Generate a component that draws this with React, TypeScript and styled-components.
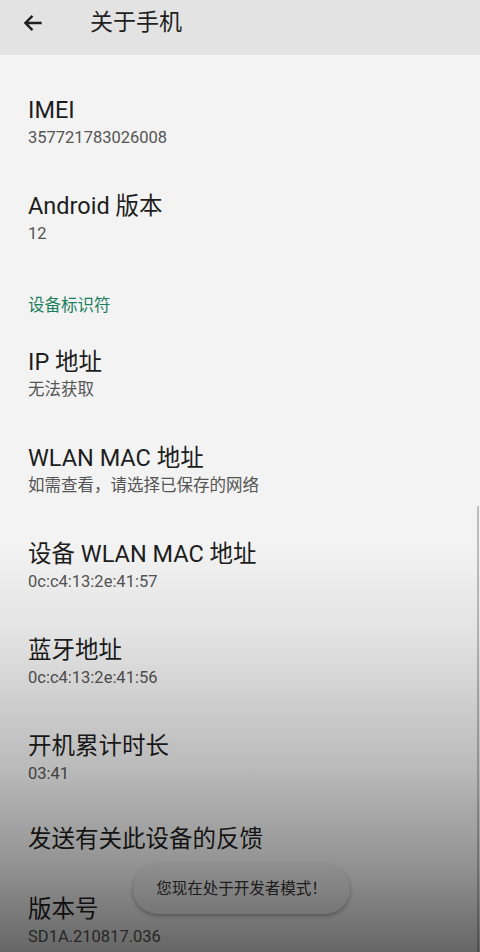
import React, { FC } from "react";
import styled, { createGlobalStyle } from "styled-components";

const GlobalStyle = createGlobalStyle`
    html, body {
        margin: 0;
        padding: 0;
        background: #f3f3f3;
    }
    body {
        font-family: Roboto, "Noto Sans CJK SC", sans-serif;
    }
`;

const Screen = styled.div`
    position: relative;
    width: 480px;
    height: 952px;
    overflow: hidden;
    background: #f3f3f3;
`;

const TopBar = styled.header`
    height: 55px;
    background: #e3e3e3;
    display: flex;
    align-items: flex-start;
    padding: 8px 0 0 20px;
    box-sizing: border-box;
    gap: 44px;
`;

const BackIcon = styled.svg`
    width: 26px;
    height: 26px;
    color: #1f1f1f;
    margin-top: 2px;
`;

const Title = styled.h1`
    margin: 0;
    font-size: 23px;
    line-height: 30px;
    font-weight: 400;
    color: #1f1f1f;
`;

const List = styled.ul`
    list-style: none;
    margin: 0;
    padding: 20px 0 0;
`;

const Entry = styled.li<{ $single?: boolean }>`
    padding: ${p => (p.$single ? "17px 28px 20px" : "20px 28px")};
    display: flex;
    flex-direction: column;
`;

const EntryTitle = styled.div`
    font-size: 23.5px;
    line-height: 30px;
    color: #1d1d1d;
`;

const EntrySummary = styled.div`
    font-size: 16.5px;
    line-height: 26px;
    color: #555;
`;

const SectionHeader = styled.li`
    padding: 28px 28px 10px;
    font-size: 16.5px;
    line-height: 22px;
    color: #1b7f5c;
`;

const Scrollbar = styled.div`
    position: absolute;
    right: 1px;
    top: 506px;
    bottom: 0;
    width: 2px;
    background: #bdbdbd;
`;

const Toast = styled.div`
    position: absolute;
    left: 133px;
    top: 864px;
    width: 217px;
    height: 50px;
    border-radius: 25px;
    background: #ececec;
    box-shadow: 0 2px 4px rgba(0, 0, 0, 0.3);
    display: flex;
    align-items: center;
    justify-content: center;
    padding-bottom: 4px;
    box-sizing: border-box;
    font-size: 15.5px;
    color: #333;
`;

const Shade = styled.div`
    position: absolute;
    inset: 0;
    pointer-events: none;
    background: linear-gradient(
        to bottom,
        rgba(0, 0, 0, 0) 0%,
        rgba(0, 0, 0, 0) 57%,
        rgba(0, 0, 0, 0.07) 67%,
        rgba(0, 0, 0, 0.24) 81%,
        rgba(0, 0, 0, 0.4) 91%,
        rgba(0, 0, 0, 0.58) 100%
    );
`;

interface Info {
    title: string;
    summary?: string;
}

const deviceInfo: Info[] = [
    { title: "IMEI", summary: "357721783026008" },
    { title: "Android 版本", summary: "12" }
];

const identifiers: Info[] = [
    { title: "IP 地址", summary: "无法获取" },
    { title: "WLAN MAC 地址", summary: "如需查看，请选择已保存的网络" },
    { title: "设备 WLAN MAC 地址", summary: "0c:c4:13:2e:41:57" },
    { title: "蓝牙地址", summary: "0c:c4:13:2e:41:56" },
    { title: "开机累计时长", summary: "03:41" },
    { title: "发送有关此设备的反馈" },
    { title: "版本号", summary: "SD1A.210817.036" }
];

const InfoEntry: FC<{ info: Info }> = ({ info }) => (
    <Entry $single={!info.summary}>
        <EntryTitle>{info.title}</EntryTitle>
        {info.summary ? <EntrySummary>{info.summary}</EntrySummary> : null}
    </Entry>
);

const App: FC = () => (
    <>
        <GlobalStyle />
        <Screen>
            <TopBar>
                <BackIcon viewBox="0 0 24 24" fill="none" stroke="currentColor" strokeWidth={2.2}>
                    <path d="M20 12H5M11.5 5.5 5 12l6.5 6.5" />
                </BackIcon>
                <Title>关于手机</Title>
            </TopBar>
            <List>
                {deviceInfo.map(i => (
                    <InfoEntry key={i.title} info={i} />
                ))}
                <SectionHeader>设备标识符</SectionHeader>
                {identifiers.map(i => (
                    <InfoEntry key={i.title} info={i} />
                ))}
            </List>
            <Scrollbar />
            <Toast>您现在处于开发者模式！</Toast>
            <Shade />
        </Screen>
    </>
);

export default App;
